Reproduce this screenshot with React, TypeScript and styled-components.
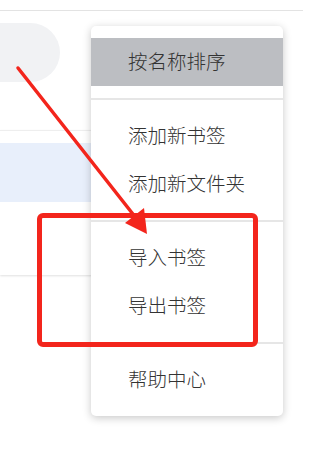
import React from "react";
import styled, { createGlobalStyle } from "styled-components";

const GlobalStyle = createGlobalStyle`
  html, body {
    margin: 0;
    padding: 0;
    background: #ffffff;
    overflow: hidden;
  }
  body {
    font-family: "Noto Sans CJK SC", "Noto Sans", sans-serif;
  }
`;

const Page = styled.div`
  position: relative;
  width: 303px;
  height: 469px;
  overflow: hidden;
  background: #fff;
`;

const TopBar = styled.div`
  height: 10px;
  border-bottom: 1px solid #e3e3e3;
`;

const SearchPill = styled.div`
  margin: 12px 0 0 -60px;
  width: 120px;
  height: 59px;
  border-radius: 30px;
  background: #f1f2f4;
`;

const Card = styled.div`
  margin-top: 48px;
  width: 220px;
  height: 132px;
  padding-top: 12px;
  border-top: 1px solid #eeeeee;
  box-shadow: 0 1px 2px rgba(0, 0, 0, 0.12);
`;

const Row = styled.div<{ $active?: boolean }>`
  height: 59px;
  background: ${(p) => (p.$active ? "#e8effb" : "transparent")};
`;

const Menu = styled.ul`
  position: absolute;
  left: 91px;
  top: 26px;
  width: 192px;
  margin: 0;
  padding: 12px 0;
  list-style: none;
  background: #fff;
  border-radius: 5px;
  box-shadow: 0 2px 8px rgba(0, 0, 0, 0.22);
`;

const Item = styled.li<{ $hover?: boolean }>`
  height: 48px;
  display: flex;
  align-items: center;
  padding: 0 0 3px 37px;
  box-sizing: border-box;
  font-size: 19.5px;
  font-weight: 300;
  color: #333;
  background: ${(p) => (p.$hover ? "#bcbec2" : "transparent")};
  cursor: pointer;
`;

const Divider = styled.li`
  height: 2px;
  margin: 12px 0;
  background: #e6e6e6;
`;

const Highlight = styled.div`
  position: absolute;
  left: 37px;
  top: 213px;
  width: 221px;
  height: 134px;
  box-sizing: border-box;
  border: 5px solid #f3251c;
  border-radius: 6px;
  pointer-events: none;
`;

const Arrow = styled.svg`
  position: absolute;
  left: 0;
  top: 0;
  pointer-events: none;
`;

const App: React.FC = () => {
  return (
    <Page>
      <GlobalStyle />
      <TopBar />
      <SearchPill />
      <Card>
        <Row $active />
      </Card>
      <Menu>
        <Item $hover>按名称排序</Item>
        <Divider />
        <Item>添加新书签</Item>
        <Item>添加新文件夹</Item>
        <Divider />
        <Item>导入书签</Item>
        <Item>导出书签</Item>
        <Divider />
        <Item>帮助中心</Item>
      </Menu>
      <Highlight />
      <Arrow width="303" height="469" viewBox="0 0 303 469">
        <line x1="18" y1="68" x2="136" y2="218" stroke="#f3251c" strokeWidth="3.5" strokeLinecap="round" />
        <polygon points="147,234 125,223 144,208" fill="#f3251c" />
      </Arrow>
    </Page>
  );
};

export default App;
